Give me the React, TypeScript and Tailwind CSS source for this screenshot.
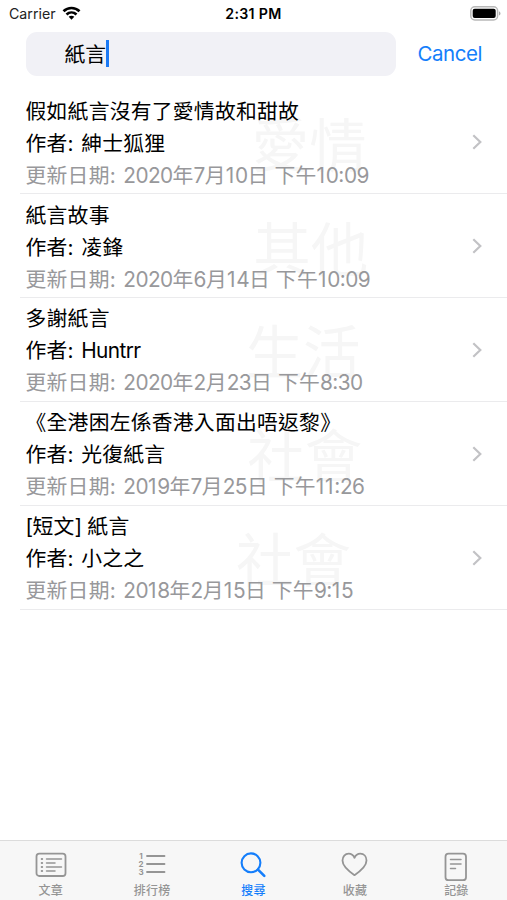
import { Fragment, type ReactNode } from "react";

type Story = { title: string; author: string; updated: string; category: string };

const stories: Story[] = [
  { title: "假如紙言沒有了愛情故和甜故", author: "紳士狐狸", updated: "2020年7月10日 下午10:09", category: "愛情" },
  { title: "紙言故事", author: "凌鋒", updated: "2020年6月14日 下午10:09", category: "其他" },
  { title: "多謝紙言", author: "Huntrr", updated: "2020年2月23日 下午8:30", category: "生活" },
  { title: "《全港困左係香港入面出唔返黎》", author: "光復紙言", updated: "2019年7月25日 下午11:26", category: "社會" },
  { title: "[短文] 紙言", author: "小之之", updated: "2018年2月15日 下午9:15", category: "社會" },
];

/** Latin runs get their own tracking; the narrow "1" and the clock's colon are spaced apart. */
function Mixed({ text }: { text: string }) {
  const runs = text.match(/1|(?<=\d):|: |[\x20-\x30\x32-\x39\x3b-\x7e]+|[^\x20-\x7e]+/g) ?? [];
  return (
    <>
      {runs.map((run, i) => {
        if (run === "1") return <span key={i} className="tracking-[0.8px]">1</span>;
        if (run === ":") return <span key={i} className="relative -top-px tracking-[-0.4px]">:</span>;
        if (run === ": ") return <span key={i} className="tracking-[-0.6px] [word-spacing:3px]">{run}</span>;
        if (/^[\x20-\x7e]/.test(run))
          return <span key={i} className="tracking-[-0.6px] [word-spacing:0.5px]">{run}</span>;
        return <Fragment key={i}>{run}</Fragment>;
      })}
    </>
  );
}

function StoryRow({ story }: { story: Story }) {
  return (
    <li className="ml-5 flex h-[103.9px] items-center justify-between border-b-[1.5px] border-[#ebebed] pr-[25px] pl-[5.5px]">
      <div className="relative w-fit pt-[4px] text-[20.8px] leading-8 tracking-[0.25px] whitespace-pre">
        <span className="absolute top-[14px] right-[2px] -z-10 font-['Inter','Noto_Sans_CJK_TC',sans-serif] text-[57.500px] leading-[80px] font-normal tracking-normal text-[#f6f6f6]">
          {story.category}
        </span>
        <p><Mixed text={story.title} /></p>
        <p><Mixed text={`作者: ${story.author}`} /></p>
        <p className="text-[#98989b]"><Mixed text={`更新日期: ${story.updated}`} /></p>
      </div>
      <svg className="mt-px h-4 w-[10px]" viewBox="0 0 10 16" fill="none" stroke="#c2c2c5" strokeWidth="2.2">
        <path d="M1.3 1.3 8.3 8l-7 6.7" />
      </svg>
    </li>
  );
}

function Tab({ label, active, children }: { label: string; active?: boolean; children: ReactNode }) {
  return (
    <button className={`flex flex-1 flex-col items-center ${active ? "text-[#147efb]" : "text-[#959595]"}`}>
      <svg className="h-[34px] w-[34px]" viewBox="0 0 34 34" fill="none" stroke="currentColor" strokeWidth="1.8" strokeLinecap="round" strokeLinejoin="round">
        {children}
      </svg>
      <span className="mt-[2px] text-[12px] leading-[14px] font-medium tracking-[0.2px]">{label}</span>
    </button>
  );
}

export default function App() {
  return (
    <div className="relative isolate flex h-[900px] w-[507px] flex-col overflow-hidden bg-white font-['Inter','Noto_Sans_CJK_TC',sans-serif] text-black">
      <header className="grid h-[27px] grid-cols-3 items-center px-2 text-[14px]">
        <div className="flex items-center gap-[6px] pl-px text-[#222]">
          <span className="text-[14.2px]">Carrier</span>
          <svg className="-mt-px h-[14px] w-[19px]" viewBox="0 0 18 14" fill="none" stroke="#000" strokeWidth="2.7">
            <path d="M1 5.2C5.5 .9 12.5 .9 17 5.2" />
            <path d="M4 8.5c2.9-2.7 7.1-2.7 10 0" />
            <path d="M6.2 10.8c1.6-1.5 4-1.5 5.6 0L9 13.7z" fill="#000" stroke="none" />
          </svg>
        </div>
        <div className="text-center text-[14.2px] font-semibold tracking-[0.3px]">2:31 PM</div>
        <svg className="-mr-[3px] h-[15px] w-[32px] justify-self-end" viewBox="0 0 32 15">
          <rect x=".8" y=".8" width="26.8" height="13.2" rx="4" fill="#fff" stroke="#b8b8b8" strokeWidth="1.5" />
          <rect x="2.7" y="2.7" width="23" height="9.4" rx="2" fill="#000" />
          <path d="M29 5.2c2 .9 2 3.5 0 4.4z" fill="#aaa" />
        </svg>
      </header>

      <div className="mt-px flex h-12 items-center pt-[3px] pr-[25px] pl-[26px]">
        <div className="flex h-11 w-[370px] items-center rounded-[11px] bg-[#f1f1f6] pl-[38.5px] text-[20.8px]">
          <span className="pt-[2px]">紙言</span>
          <span className="h-[27px] w-[2.5px] bg-[#1a79f5]" />
        </div>
        <button className="ml-auto pt-[2px] text-[20.5px] tracking-[-0.45px] text-[#147efb]">Cancel</button>
      </div>

      <ul className="mt-[14.2px] flex-1">
        {stories.map((story) => (
          <StoryRow key={story.title} story={story} />
        ))}
      </ul>

      <nav className="flex h-[60.5px] border-t-[1.5px] border-[#dcdcdc] bg-[#f7f7f7] pt-[7px]">
        <Tab label="文章">
          <rect x="2.5" y="5.7" width="29" height="22.3" rx="2.8" />
          <path d="M12.5 11h15M12.5 15h8.5M12.5 19h15M12.5 23h8.5" strokeWidth="1.5" />
          <path d="M7.8 11h.3M7.8 15h.3M7.8 19h.3M7.8 23h.3" strokeWidth="2.2" />
        </Tab>
        <Tab label="排行榜">
          <path d="M12 8h17.500M12 16h17.500M12 24h17.500" />
          <g fill="currentColor" stroke="none" fontSize="8" fontWeight="700" fontFamily="Inter" textAnchor="middle">
            <text x="6" y="11">1</text>
            <text x="6" y="19">2</text>
            <text x="6" y="27">3</text>
          </g>
        </Tab>
        <Tab label="搜尋" active>
          <circle cx="14" cy="14.8" r="9.4" strokeWidth="2.1" />
          <path d="m21 21.600 6.300 6.300" strokeWidth="2.6" />
        </Tab>
        <Tab label="收藏">
          <path d="M16.500 27.200C11.800 24 4.500 19 4.500 12.600c0-4 2.600-6.900 6.200-6.900 2.700 0 4.700 1.600 5.800 4.100 1.100-2.500 3.100-4.100 5.800-4.100 3.600 0 6.200 2.900 6.200 6.900C28.500 19 21.200 24 16.500 27.200z" />
        </Tab>
        <Tab label="記錄">
          <rect x="6.500" y="5.700" width="20.500" height="26.500" rx="3" />
          <path d="M11.500 11.500h10.500M11.500 16h10.500M11.500 20.500h5" strokeWidth="1.5" />
        </Tab>
      </nav>
    </div>
  );
}
